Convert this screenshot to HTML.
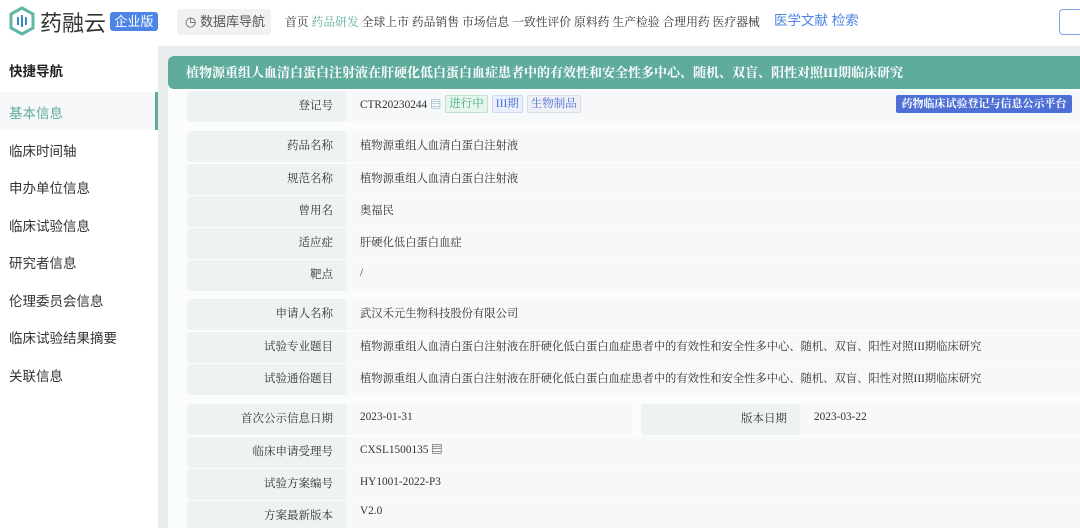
<!DOCTYPE html><html><head><meta charset="utf-8"><style>
*{margin:0;padding:0;box-sizing:border-box}
html,body{width:1080px;height:528px;overflow:hidden}
body{background:#e9ecee;font-family:"Liberation Serif","Noto Serif CJK SC",serif;color:#333;position:relative}
.hdr{position:absolute;left:0;top:0;width:1080px;height:46px;background:#fff}
.abs{position:absolute}
.side{position:absolute;left:0;top:46px;width:158px;height:482px;background:#fff}
.si{position:absolute;left:9px;font-size:13.5px;color:#333;font-family:"Liberation Sans","Noto Sans CJK SC",sans-serif}
.main{position:absolute;left:168px;top:56px;width:912px;height:472px;background:#fbfcfc;border-radius:6px 0 0 0}
.title{position:absolute;left:168px;top:56px;width:912px;height:33px;background:#5fac9d;border-radius:6px 0 0 6px;color:#fff;font-weight:bold;font-size:13px;line-height:33px;padding-left:18px;white-space:nowrap}
.l{position:absolute;background:#eef2f3;font-size:11.5px;text-align:right;padding-right:13px;border-radius:4px 0 0 4px}
.v{position:absolute;background:#f6f8f9;font-size:11.3px;padding-left:14px;white-space:nowrap}
.tag{display:inline-block;font-size:11.5px;padding:0 3px;border-radius:2px;margin-left:4px;line-height:16px;vertical-align:1px}
</style></head><body>
<div class="hdr"></div>
<svg class="abs" style="left:8px;top:6px" width="28" height="30" viewBox="0 0 28 30"><path d="M14 2 L25 8 L25 22 L14 28 L3 22 L3 8 Z" fill="none" stroke="#5fb7a6" stroke-width="3"/><g fill="#3f88c8"><rect x="9" y="11" width="2" height="8"/><rect x="13" y="9" width="2" height="12"/><rect x="17" y="11" width="2" height="8"/></g></svg>
<div class="abs" style="left:40px;top:6px;font-size:22px;color:#333;font-family:'Liberation Sans','Noto Sans CJK SC',sans-serif">药融云</div>
<div class="abs" style="left:110px;top:12px;width:48px;height:19px;background:#4d84e6;border-radius:3px;color:#fff;font-size:13px;line-height:19px;text-align:center;font-family:'Liberation Sans','Noto Sans CJK SC',sans-serif">企业版</div>
<div class="abs" style="left:177px;top:9px;width:94px;height:26px;background:#f0f1f2;border-radius:3px;font-size:13px;line-height:26px;color:#555;padding-left:8px;font-family:'Liberation Sans','Noto Sans CJK SC',sans-serif">◷ 数据库导航</div>
<div class="abs" style="left:285px;top:13px;font-size:11.8px;color:#333;white-space:nowrap">首页 <span style="color:#5fac9d">药品研发</span> 全球上市 药品销售 市场信息 一致性评价 原料药 生产检验 合理用药 医疗器械</div>
<div class="abs" style="left:774px;top:9px;font-size:13.5px;color:#4d84e6;font-family:'Liberation Sans','Noto Sans CJK SC',sans-serif">医学文献 检索</div>
<div class="abs" style="left:1059px;top:9px;width:30px;height:26px;border:1px solid #7ea3e8;border-radius:4px;background:#fff"></div>
<div class="side"></div>
<div class="si" style="top:60px;font-weight:bold;color:#222">快捷导航</div>
<div class="abs" style="left:0;top:92px;width:158px;height:38px;background:#f6f8f9;border-right:3px solid #5fac9d"></div>
<div class="si" style="top:102px;color:#5fac9d">基本信息</div>
<div class="si" style="top:140px">临床时间轴</div>
<div class="si" style="top:177px">申办单位信息</div>
<div class="si" style="top:215px">临床试验信息</div>
<div class="si" style="top:252px">研究者信息</div>
<div class="si" style="top:290px">伦理委员会信息</div>
<div class="si" style="top:327px">临床试验结果摘要</div>
<div class="si" style="top:365px">关联信息</div>
<div class="main"></div>
<div class="title">植物源重组人血清白蛋白注射液在肝硬化低白蛋白血症患者中的有效性和安全性多中心、随机、双盲、阳性对照III期临床研究</div>
<div class="l" style="left:187px;top:91px;width:159px;height:31px;line-height:31px">登记号</div>
<div class="v" style="left:346px;top:91px;width:734px;height:31px;line-height:28px">CTR20230244 <span style="color:#7ab">▤</span><span class="tag" style="background:#e6f5ee;color:#3aa875;border:1px solid #bfe3cf">进行中</span><span class="tag" style="background:#e9effc;color:#4d6fd6;border:1px solid #cdd9f5">III期</span><span class="tag" style="background:#eef0f5;color:#4d6fd6;border:1px solid #d8dde8">生物制品</span></div>
<div class="abs" style="left:896px;top:95px;width:176px;height:18px;background:#4d6fd6;color:#fff;font-size:11px;font-weight:bold;line-height:18px;text-align:center;border-radius:2px;white-space:nowrap">药物临床试验登记与信息公示平台</div>
<div class="l" style="left:187px;top:131px;width:159px;height:31px;line-height:31px">药品名称</div><div class="v" style="left:346px;top:131px;width:734px;height:31px;line-height:31px">植物源重组人血清白蛋白注射液</div>
<div class="l" style="left:187px;top:164px;width:159px;height:31px;line-height:31px">规范名称</div><div class="v" style="left:346px;top:164px;width:734px;height:31px;line-height:31px">植物源重组人血清白蛋白注射液</div>
<div class="l" style="left:187px;top:196px;width:159px;height:31px;line-height:31px">曾用名</div><div class="v" style="left:346px;top:196px;width:734px;height:31px;line-height:31px">奥福民</div>
<div class="l" style="left:187px;top:228px;width:159px;height:31px;line-height:31px">适应症</div><div class="v" style="left:346px;top:228px;width:734px;height:31px;line-height:31px">肝硬化低白蛋白血症</div>
<div class="l" style="left:187px;top:260px;width:159px;height:31px;line-height:31px">靶点</div><div class="v" style="left:346px;top:260px;width:734px;height:31px;line-height:26px">/</div>
<div class="l" style="left:187px;top:299px;width:159px;height:31px;line-height:31px">申请人名称</div><div class="v" style="left:346px;top:299px;width:734px;height:31px;line-height:31px">武汉禾元生物科技股份有限公司</div>
<div class="l" style="left:187px;top:332px;width:159px;height:31px;line-height:31px">试验专业题目</div><div class="v" style="left:346px;top:332px;width:734px;height:31px;line-height:31px">植物源重组人血清白蛋白注射液在肝硬化低白蛋白血症患者中的有效性和安全性多中心、随机、双盲、阳性对照III期临床研究</div>
<div class="l" style="left:187px;top:364px;width:159px;height:31px;line-height:31px">试验通俗题目</div><div class="v" style="left:346px;top:364px;width:734px;height:31px;line-height:31px">植物源重组人血清白蛋白注射液在肝硬化低白蛋白血症患者中的有效性和安全性多中心、随机、双盲、阳性对照III期临床研究</div>
<div class="l" style="left:187px;top:404px;width:159px;height:31px;line-height:31px">首次公示信息日期</div><div class="v" style="left:346px;top:404px;width:286px;height:31px;line-height:26px">2023-01-31</div>
<div class="l" style="left:641px;top:404px;width:159px;height:31px;line-height:31px">版本日期</div><div class="v" style="left:800px;top:404px;width:280px;height:31px;line-height:26px">2023-03-22</div>
<div class="l" style="left:187px;top:437px;width:159px;height:31px;line-height:31px">临床申请受理号</div><div class="v" style="left:346px;top:437px;width:734px;height:31px;line-height:26px">CXSL1500135 ▤</div>
<div class="l" style="left:187px;top:469px;width:159px;height:31px;line-height:31px">试验方案编号</div><div class="v" style="left:346px;top:469px;width:734px;height:31px;line-height:26px">HY1001-2022-P3</div>
<div class="l" style="left:187px;top:501px;width:159px;height:27px;line-height:31px">方案最新版本</div><div class="v" style="left:346px;top:501px;width:734px;height:27px;line-height:20px">V2.0</div>
</body></html>
